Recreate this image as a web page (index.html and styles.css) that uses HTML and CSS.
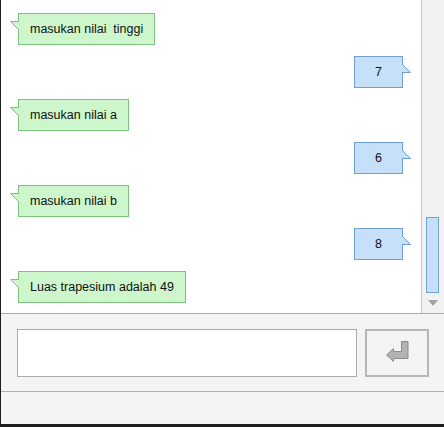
FILE: index.html
```html
<!DOCTYPE html>
<html>
<head>
<meta charset="utf-8">
<link rel="stylesheet" href="styles.css">
</head>
<body>
<div class="window">
  <div class="chat">
    <div class="messages">
      <div class="row left"><div class="bubble green"><svg class="tail tail-l" width="9" height="10" viewBox="0 0 9 10"><polygon points="9,0.5 0.5,0.5 9,9" fill="#cdf6cd"/><polyline points="9,0.5 0.5,0.5 9,9" fill="none" stroke="#7fc17f" stroke-width="1"/></svg>masukan nilai  tinggi</div></div>
      <div class="row right"><div class="bubble blue"><svg class="tail tail-r" width="9" height="10" viewBox="0 0 9 10"><polygon points="0,0 8.5,8.5 0,8.5" fill="#c6e0fa"/><polyline points="0,0 8.5,8.5 0,8.5" fill="none" stroke="#6f9fd3" stroke-width="1"/></svg>7</div></div>
      <div class="row left"><div class="bubble green"><svg class="tail tail-l" width="9" height="10" viewBox="0 0 9 10"><polygon points="9,0.5 0.5,0.5 9,9" fill="#cdf6cd"/><polyline points="9,0.5 0.5,0.5 9,9" fill="none" stroke="#7fc17f" stroke-width="1"/></svg>masukan nilai a</div></div>
      <div class="row right"><div class="bubble blue"><svg class="tail tail-r" width="9" height="10" viewBox="0 0 9 10"><polygon points="0,0 8.5,8.5 0,8.5" fill="#c6e0fa"/><polyline points="0,0 8.5,8.5 0,8.5" fill="none" stroke="#6f9fd3" stroke-width="1"/></svg>6</div></div>
      <div class="row left"><div class="bubble green"><svg class="tail tail-l" width="9" height="10" viewBox="0 0 9 10"><polygon points="9,0.5 0.5,0.5 9,9" fill="#cdf6cd"/><polyline points="9,0.5 0.5,0.5 9,9" fill="none" stroke="#7fc17f" stroke-width="1"/></svg>masukan nilai b</div></div>
      <div class="row right"><div class="bubble blue"><svg class="tail tail-r" width="9" height="10" viewBox="0 0 9 10"><polygon points="0,0 8.5,8.5 0,8.5" fill="#c6e0fa"/><polyline points="0,0 8.5,8.5 0,8.5" fill="none" stroke="#6f9fd3" stroke-width="1"/></svg>8</div></div>
      <div class="row left"><div class="bubble green"><svg class="tail tail-l" width="9" height="10" viewBox="0 0 9 10"><polygon points="9,0.5 0.5,0.5 9,9" fill="#cdf6cd"/><polyline points="9,0.5 0.5,0.5 9,9" fill="none" stroke="#7fc17f" stroke-width="1"/></svg>Luas trapesium adalah 49</div></div>
    </div>
    <div class="scrollbar">
      <div class="track"><div class="thumb"></div></div>
      <div class="arrow"></div>
    </div>
  </div>
  <div class="input-panel">
    <div class="input"></div>
    <div class="send">
      <svg width="23" height="24" viewBox="0 0 23 24"><path d="M0.5 14 L7.5 7.5 L7.5 10.5 L15.5 10.5 L15.5 0.5 L22 0.5 L22 17.5 L7.5 17.5 L7.5 20.5 Z" fill="#b2b2b2" stroke="#8c8c8c" stroke-width="1"/></svg>
    </div>
  </div>
  <div class="status"></div>
</div>
</body>
</html>
```

FILE: styles.css
```css
* { box-sizing: border-box; }
html, body {
  margin: 0;
  padding: 0;
  background: #1e1e1e;
}
.window {
  width: 444px;
  height: 424px;
  margin-left: 1px;
  background: #f4f4f4;
  display: flex;
  flex-direction: column;
  font-family: "Liberation Sans", Arial, sans-serif;
  font-size: 12.5px;
  color: #111111;
}
.chat {
  height: 314px;
  display: flex;
  border-bottom: 1px solid #adadad;
  background: #ffffff;
}
.messages {
  flex: 1;
  display: flex;
  flex-direction: column;
  gap: 11px;
  padding: 13px 18px 0 17px;
}
.row {
  display: flex;
}
.row.right {
  justify-content: flex-end;
}
.bubble {
  position: relative;
  height: 32px;
  line-height: 30px;
  white-space: pre;
}
.green {
  background: #cdf6cd;
  border: 1px solid #7fc17f;
  padding: 0 11px;
}
.blue {
  background: #c6e0fa;
  border: 1px solid #6f9fd3;
  min-width: 49px;
  text-align: center;
}
.tail {
  position: absolute;
  display: block;
}
.tail-l {
  left: -9px;
  top: 7px;
}
.tail-r {
  right: -9px;
  top: 7px;
}
.scrollbar {
  width: 24px;
  background: #f2f2f2;
  border-left: 1px solid #c4c4c4;
  display: flex;
  flex-direction: column;
  padding: 0 6px 0 4px;
}
.track {
  flex: 1;
  display: flex;
  flex-direction: column;
  justify-content: flex-end;
  padding-bottom: 6px;
}
.thumb {
  height: 76px;
  background: #c6e0fa;
  border: 1px solid #6fa2d8;
}
.arrow {
  height: 14px;
  display: flex;
  justify-content: center;
  align-items: flex-start;
  padding-top: 1px;
}
.arrow::before {
  content: "";
  border-left: 5px solid transparent;
  border-right: 5px solid transparent;
  border-top: 6px solid #a3a3a3;
}
.input-panel {
  height: 78px;
  display: flex;
  gap: 8px;
  padding: 15px 16px 0 16px;
  border-bottom: 1px solid #b0b0b0;
}
.input {
  flex: 1;
  height: 48px;
  background: #ffffff;
  border: 1px solid #ababab;
}
.send {
  width: 64px;
  height: 48px;
  border: 2px solid #b6b6b6;
  background: #f4f4f4;
  display: flex;
  align-items: center;
  justify-content: center;
}
.status {
  flex: 1;
}
```
